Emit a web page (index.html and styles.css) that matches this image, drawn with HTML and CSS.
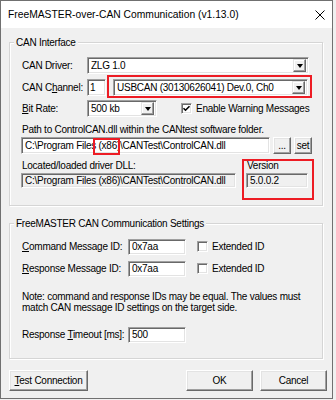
FILE: index.html
```html
<!DOCTYPE html>
<html lang="en">
<head>
    <meta charset="UTF-8">
    <title>FreeMASTER-over-CAN Communication</title>
    <link rel="stylesheet" href="styles.css">
</head>
<body>
    <div class="win">
        <div class="titlebar">
            <span class="title">FreeMASTER-over-CAN Communication (v1.13.0)</span>
            <svg class="close" width="10" height="10" viewBox="0 0 10 10"><path d="M0.5 0.5L9.5 9.5M9.5 0.5L0.5 9.5" stroke="#000" stroke-width="1" fill="none"/></svg>
        </div>

        <div class="client">
            <!-- CAN interface -->
            <div class="group g-can">
                <span class="legend">CAN Interface</span>
                <div class="row">
                    <span class="lbl">CAN Driver:</span>
                    <div class="combo w-driver"><span class="val">ZLG 1.0</span><span class="drop"><i class="tri"></i></span></div>
                </div>
                <div class="row r-channel">
                    <span class="lbl">CAN C<u>h</u>annel:</span>
                    <div class="edit w-ch">1</div>
                    <div class="combo w-chan"><span class="val">USBCAN (30130626041) Dev.0, Ch0</span><span class="drop"><i class="tri"></i></span></div>
                </div>
                <div class="row r-bit">
                    <span class="lbl"><u>B</u>it Rate:</span>
                    <div class="combo w-bit"><span class="val">500 kb</span><span class="drop"><i class="tri"></i></span></div>
                    <span class="chk chk-warn"><svg width="9" height="9" viewBox="0 0 9 9"><path d="M1.5 4.2L3.5 6.2L7.5 2.2" stroke="#000" stroke-width="1.6" fill="none"/></svg></span>
                    <span class="chk-text">Enable Warning Messages</span>
                </div>
                <div class="plabel">Path to ControlCAN.dll within the CANtest software folder.</div>
                <div class="row r-path">
                    <div class="edit w-path">C:\Program Files (x86)\CANTest\ControlCAN.dll</div>
                    <div class="btn w-dots">...</div>
                    <div class="btn w-set">set</div>
                </div>
                <div class="r-located">
                    <div class="col-dll">
                        <div class="clabel">Located/loaded driver DLL:</div>
                        <div class="edit ro">C:\Program Files (x86)\CANTest\ControlCAN.dll</div>
                    </div>
                    <div class="col-ver">
                        <div class="clabel">Version</div>
                        <div class="edit ro">5.0.0.2</div>
                    </div>
                </div>
            </div>

            <!-- FreeMASTER settings -->
            <div class="group g-fm">
                <span class="legend">FreeMASTER CAN Communication Settings</span>
                <div class="row r-id">
                    <span class="lbl2"><u>C</u>ommand Message ID:</span>
                    <div class="edit w-id">0x7aa</div>
                    <span class="chk chk-ext"></span>
                    <span class="chk-text">Extended ID</span>
                </div>
                <div class="row r-id r-id2">
                    <span class="lbl2"><u>R</u>esponse Message ID:</span>
                    <div class="edit w-id">0x7aa</div>
                    <span class="chk chk-ext"></span>
                    <span class="chk-text">Extended ID</span>
                </div>
                <p class="note">Note: command and response IDs may be equal. The values must<br>match CAN message ID settings on the target side.</p>
                <div class="row r-id r-timeout">
                    <span class="lbl2">Response <u>T</u>imeout [ms]:</span>
                    <div class="edit w-id">500</div>
                </div>
            </div>

            <div class="buttons">
                <div class="btn w-test"><span><u>T</u>est Connection</span></div>
                <div class="btn w-ok">OK</div>
                <div class="btn w-cancel">Cancel</div>
            </div>
        </div>

        <!-- red annotation boxes -->
        <div class="mark m-channel"></div>
        <div class="mark m-x86"></div>
        <div class="mark m-version"></div>
    </div>
</body>
</html>
```

FILE: styles.css
```css
* { margin: 0; padding: 0; box-sizing: border-box; }
body { background: #f0f0f0; color: #000; font-family: "Liberation Sans", Arial, sans-serif; font-size: 10px; letter-spacing: -0.25px; line-height: 12px; }
u { text-decoration: underline; text-underline-offset: 1px; }

.win { position: relative; width: 333px; height: 399px; border: 1px solid #707070; background: #f0f0f0; overflow: hidden; }
.titlebar { height: 27px; background: #fff; display: flex; align-items: center; justify-content: space-between; padding: 0 7px 0 7px; }
.title { font-size: 10.3px; letter-spacing: 0; }
.close { margin-top: 1px; }

.client { padding: 14px 5px 0 8px; }

.group { position: relative; width: 314px; border: 1px solid #d5d5d5; box-shadow: inset 1px 1px #fff, 1px 1px #fff; padding: 14px 0 0 12px; }
.legend { position: absolute; top: -7px; left: 4px; padding: 0 2px; background: #f0f0f0; line-height: 13px; }
.g-can { height: 164px; }
.g-fm { height: 136px; margin-top: 17px; }

.row { display: flex; align-items: center; height: 17px; }
.lbl { width: 65px; white-space: nowrap; }
.lbl2 { width: 106px; white-space: nowrap; }
.r-channel { margin-top: 5px; }
.r-bit { margin-top: 4px; }

/* sunken controls */
.edit, .combo, .chk { background: #fff; border: 1px solid; border-color: #a0a0a0 #fff #fff #a0a0a0; box-shadow: inset 1px 1px #696969, inset -1px -1px #e3e3e3; }
.edit { height: 17px; display: flex; align-items: center; padding-left: 3px; white-space: nowrap; overflow: hidden; }
.edit.ro { background: #f0f0f0; height: 15px; margin-top: 1px; }
.combo { height: 17px; display: flex; align-items: center; padding: 0 2px 0 3px; }
.combo .val { flex: 1; white-space: nowrap; overflow: hidden; }
.drop { width: 13px; height: 13px; background: #f0f0f0; border: 1px solid; border-color: #e3e3e3 #696969 #696969 #e3e3e3; box-shadow: inset -1px -1px #a0a0a0, inset 1px 1px #fff; display: flex; align-items: center; justify-content: center; }
.tri { width: 0; height: 0; border-left: 3.5px solid transparent; border-right: 3.5px solid transparent; border-top: 4px solid #000; }

.w-driver { width: 222px; }
.w-ch { width: 19px; padding-left: 2px; }
.w-chan { width: 195px; margin-left: 7px; }
.w-bit { width: 70px; }

.chk { width: 11px; height: 11px; display: flex; align-items: center; justify-content: center; }
.chk-warn { margin-left: 24px; }
.chk-ext { margin-left: 11px; }
.chk-text { margin-left: 4px; white-space: nowrap; }

.plabel { margin-top: 7px; white-space: nowrap; }
.r-path { margin-top: 1px; margin-left: -1px; }
.w-path { width: 249px; }

/* raised buttons */
.btn { background: #f0f0f0; border: 1px solid; border-color: #fff #696969 #696969 #fff; box-shadow: inset -1px -1px #a0a0a0, inset 1px 1px #e3e3e3; display: flex; align-items: center; justify-content: center; white-space: nowrap; }
.w-dots { width: 18px; height: 17px; margin-left: 3px; }
.w-set { width: 18px; height: 17px; margin-left: 3px; }

.r-located { display: flex; margin-top: 6px; margin-left: -1px; }
.col-dll { width: 215px; }
.col-ver { width: 62px; margin-left: 10px; }
.clabel { padding-left: 1px; white-space: nowrap; }

.r-id .edit { width: 58px; height: 16px; }
.r-id2 { margin-top: 5px; }
.note { margin-top: 14px; line-height: 11px; white-space: nowrap; }
.r-timeout { margin-top: 13px; }

.buttons { display: flex; width: 318px; height: 21px; margin-top: 11px; }
.buttons .btn { height: 21px; }
.w-test { width: 79px; }
.w-ok { width: 67px; margin-left: auto; }
.w-cancel { width: 67px; margin-left: 7px; }

.mark { position: absolute; border: 2px solid #ed1c24; }
.m-channel { left: 106px; top: 74px; width: 205px; height: 23px; }
.m-x86 { left: 92px; top: 137px; width: 27px; height: 17px; }
.m-version { left: 241px; top: 158px; width: 72px; height: 41px; }
```
